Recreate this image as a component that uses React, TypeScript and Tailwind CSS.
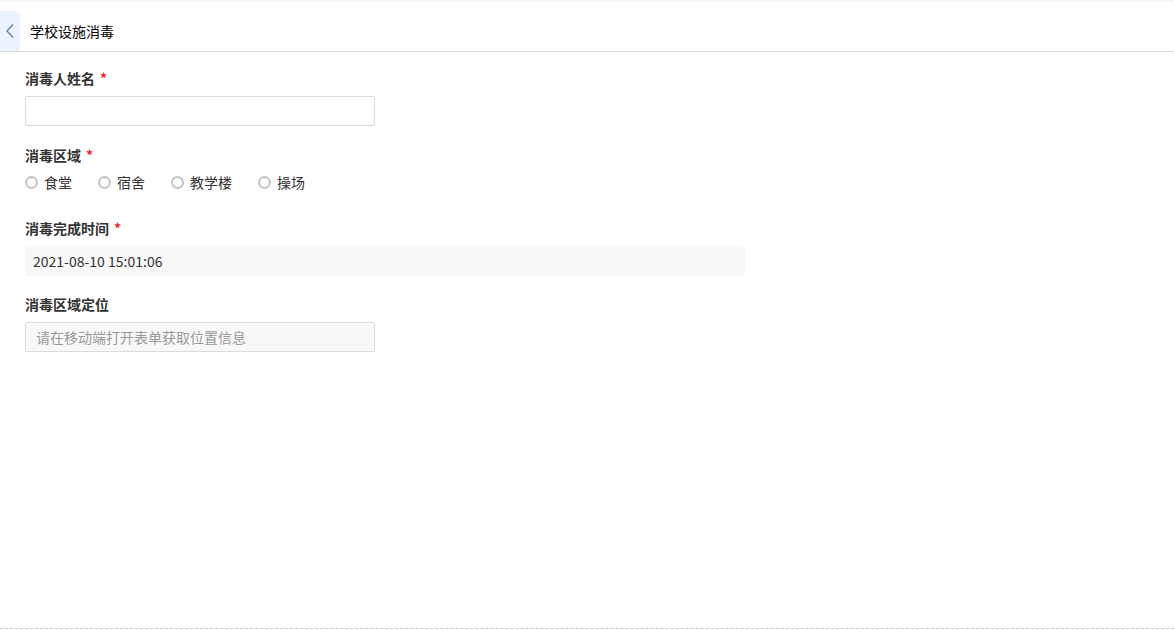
import React from "react";

const font = { fontFamily: '"Noto Sans CJK SC", "Noto Sans", sans-serif' };

function Label({ text, required }: { text: string; required?: boolean }) {
  return (
    <div className="flex items-center h-[20px] text-[14px] font-bold text-[#333]">
      <span>{text}</span>
      {required && <span className="ml-[5px] text-[#f5222d]">*</span>}
    </div>
  );
}

function Radio({ label }: { label: string }) {
  return (
    <label className="flex items-center mr-[26px]">
      <span className="w-[13px] h-[13px] rounded-full border-2 border-[#c4c4c4] bg-white box-border" />
      <span className="ml-[6px] text-[14px] text-[#333]">{label}</span>
    </label>
  );
}

export default function App() {
  return (
    <div className="w-[1174px] h-[630px] bg-white relative" style={font}>
      <div className="h-[2px] bg-[#f5f5f5]" />
      <div className="h-[50px] flex items-end border-b border-[#dcdcdc]">
        <div className="h-[40px] flex items-center">
          <div className="w-[20px] h-[40px] bg-[#eaf3ff] rounded-tr-[4px] flex items-center justify-center">
            <svg width="10" height="16" viewBox="0 0 10 16">
              <path d="M8 1.5 L2 8 L8 14.5" fill="none" stroke="#5b7fb3" strokeWidth="1.3" />
            </svg>
          </div>
          <span className="ml-[10px] text-[14px] text-black">学校设施消毒</span>
        </div>
      </div>
      <div className="pl-[25px] pt-[16px]">
        <Label text="消毒人姓名" required />
        <div className="mt-[8px] w-[350px] h-[30px] border border-[#dcdcdc] rounded-[2px] bg-white" />

        <div className="mt-[19px]">
          <Label text="消毒区域" required />
        </div>
        <div className="mt-[7px] flex items-center h-[20px]">
          <Radio label="食堂" />
          <Radio label="宿舍" />
          <Radio label="教学楼" />
          <Radio label="操场" />
        </div>

        <div className="mt-[26px]">
          <Label text="消毒完成时间" required />
        </div>
        <div className="mt-[8px] w-[720px] h-[30px] bg-[#f8f8f8] rounded-[2px] flex items-center pl-[8px] text-[14px] text-[#333]">
          2021-08-10 15:01:06
        </div>

        <div className="mt-[18px]">
          <Label text="消毒区域定位" />
        </div>
        <div className="mt-[8px] w-[350px] h-[30px] bg-[#f8f8f8] border border-[#dcdcdc] rounded-[2px] flex items-center pl-[10px] text-[14px] text-[#999]">
          请在移动端打开表单获取位置信息
        </div>
      </div>
      <div className="absolute left-0 right-0 top-[628px] border-t border-dashed border-[#c8c8c8]" />
    </div>
  );
}
